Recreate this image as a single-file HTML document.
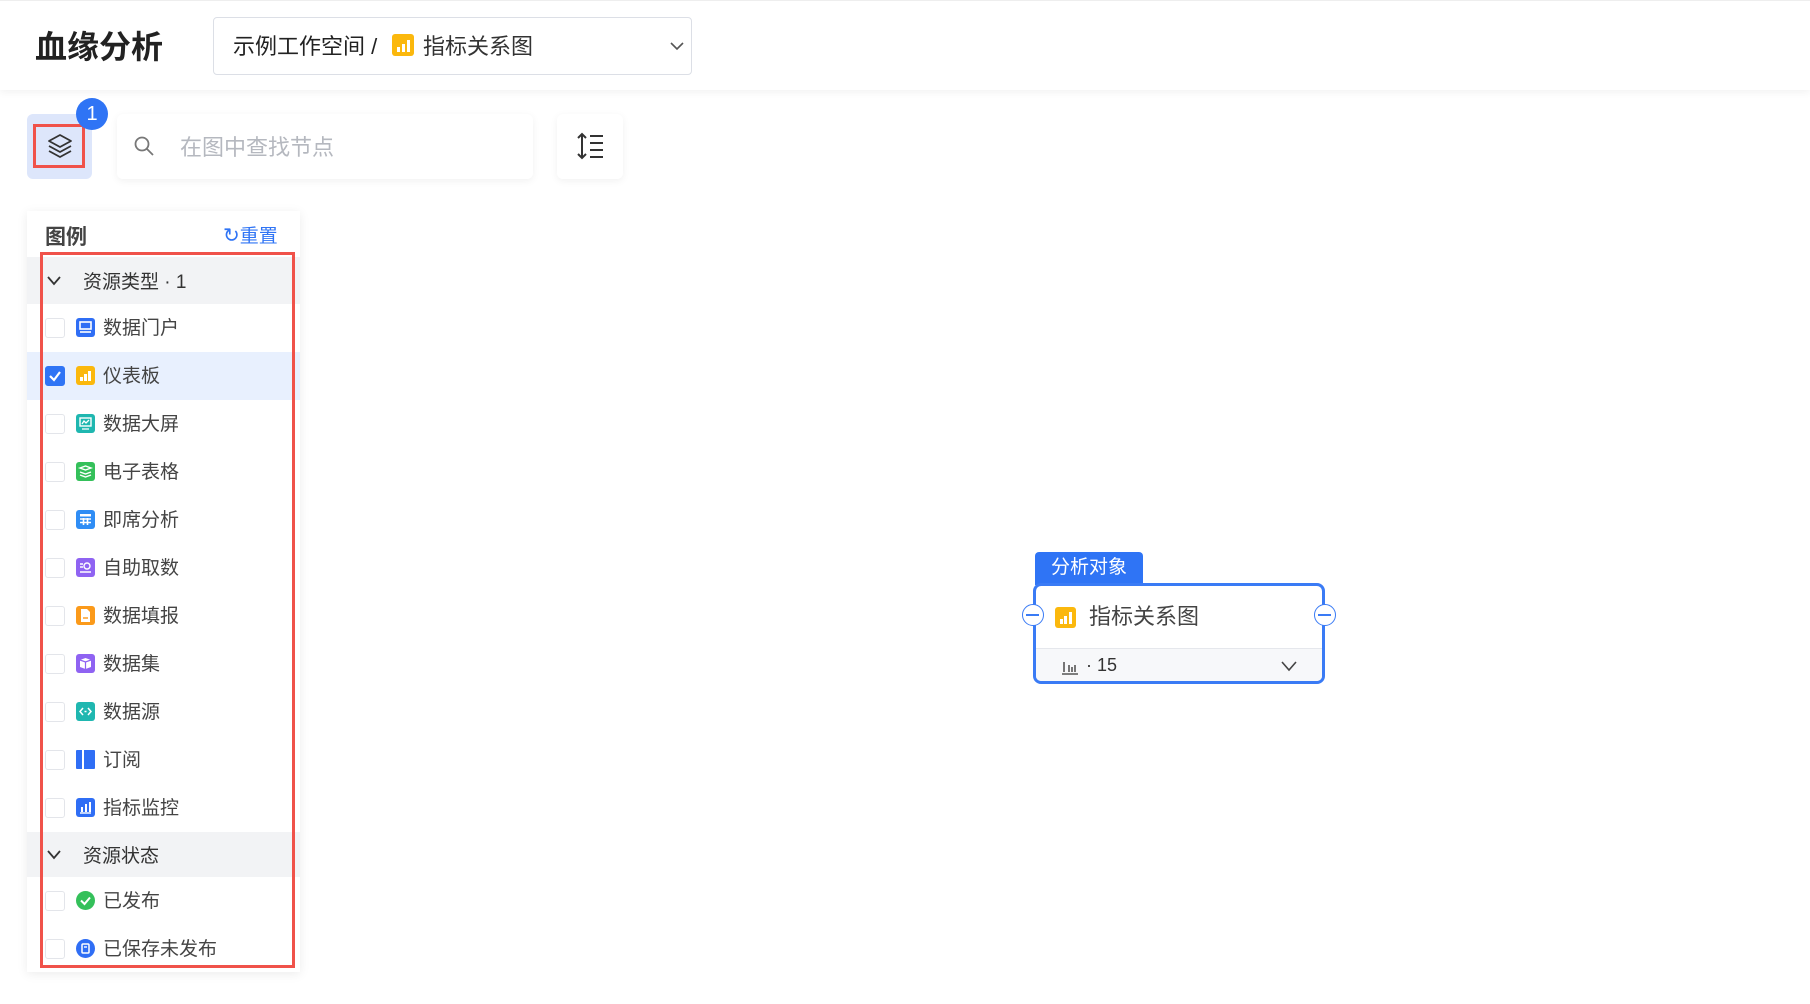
<!DOCTYPE html>
<html><head><meta charset="utf-8"><style>
*{box-sizing:border-box;margin:0;padding:0}
body{width:1810px;height:1004px;background:#fff;font-family:"Liberation Sans","Noto Sans CJK SC",sans-serif;position:relative;overflow:hidden;color:#333}
.abs{position:absolute}
.header{left:0;top:0;width:1810px;height:90px;background:#fff;box-shadow:0 2px 8px rgba(0,0,0,.06);border-top:1px solid #eee}
.title{left:35px;top:22px;font-size:32px;font-weight:bold;color:#222}
.dd{left:213px;top:17px;width:479px;height:58px;border:1px solid #dcdfe6;border-radius:4px;background:#fff}
.dd span{position:absolute;top:11px;font-size:22px;color:#222}
.btn{background:#fff;border-radius:6px;box-shadow:0 2px 8px rgba(0,0,0,.06)}
.panel{left:27px;top:211px;width:273px;height:761px;background:#fff;box-shadow:0 2px 10px rgba(0,0,0,.08)}
.row{position:absolute;left:0;width:273px;height:48px}
.row .cb{position:absolute;left:18px;top:14px;width:20px;height:20px;border:1px solid #e3e5ea;border-radius:3px;background:#fff}
.row .ic{position:absolute;left:49px;top:14px;width:19px;height:19px;border-radius:3px}
.row .ic svg{position:absolute;left:0;top:0}
.row .t{position:absolute;left:76px;top:9px;font-size:19px;color:#444}
.sec{position:absolute;left:0;width:273px;background:#f2f3f5}
.sec .t{position:absolute;left:56px;font-size:19px;color:#333}
</style></head><body>
<div class="abs header"></div>
<div class="abs title">血缘分析</div>
<div class="abs dd">
<span style="left:19px">示例工作空间 /</span>
<span style="left:178px;top:16px;width:22px;height:22px;background:#fbb80d;border-radius:3px"><svg width="22" height="22"><rect x="5" y="13" width="3" height="5" fill="#fff"/><rect x="10" y="10" width="3" height="8" fill="#fff"/><rect x="15" y="6" width="3" height="12" fill="#fff"/></svg></span>
<span style="left:209px;color:#333">指标关系图</span>
<svg style="position:absolute;left:455px;top:22px" width="16" height="12"><path d="M2 3 L8 9 L14 3" stroke="#555" stroke-width="1.6" fill="none"/></svg>
</div>

<div class="abs" style="left:27px;top:114px;width:65px;height:65px;background:#dde6fb;border-radius:6px"></div>
<div class="abs" style="left:33px;top:124px;width:52px;height:44px;border:3px solid #f0524a"></div>
<svg class="abs" style="left:45px;top:131px" width="30" height="30" viewBox="0 0 30 30"><g stroke="#333" stroke-width="1.8" fill="none" stroke-linejoin="round"><path d="M15 4 L26 10 L15 16 L4 10 Z"/><path d="M4 15 L15 21 L26 15"/><path d="M4 20 L15 26 L26 20"/></g></svg>
<div class="abs" style="left:76px;top:98px;width:32px;height:32px;border-radius:50%;background:#2f74f5;color:#fff;font-size:20px;text-align:center;line-height:32px">1</div>

<div class="abs btn" style="left:117px;top:114px;width:416px;height:65px"></div>
<svg class="abs" style="left:133px;top:135px" width="22" height="22"><circle cx="9" cy="9" r="6.5" stroke="#777" stroke-width="1.8" fill="none"/><path d="M14 14 L20 20" stroke="#777" stroke-width="1.8"/></svg>
<div class="abs" style="left:180px;top:130px;font-size:22px;color:#b5b8bf">在图中查找节点</div>

<div class="abs btn" style="left:557px;top:114px;width:66px;height:65px"></div>
<svg class="abs" style="left:576px;top:131px" width="30" height="30"><g stroke="#333" stroke-width="2" fill="none"><path d="M6 3 V27"/><path d="M2 7 L6 3 L10 7"/><path d="M2 23 L6 27 L10 23"/><path d="M14 5 H27 M14 12 H27 M14 19 H27 M14 26 H27"/></g></svg>

<div class="abs panel">
<div class="abs" style="left:18px;top:10px;font-size:21px;font-weight:bold;color:#444">图例</div>
<div class="abs" style="left:196px;top:10px;font-size:19px;color:#2f74f5"><span style="font-size:20px">↻</span>重置</div>
<div class="sec" style="top:46px;height:47px"><svg style="position:absolute;left:19px;top:18px" width="16" height="12"><path d="M2 2 L8 9 L14 2" stroke="#333" stroke-width="1.8" fill="none"/></svg><span class="t" style="top:10px">资源类型 · 1</span></div>
<div class="row" style="top:93px"><div class="cb"></div><div class="ic" style="background:#2f6ef5"><svg width="19" height="19"><rect x="4" y="4" width="11" height="7" fill="none" stroke="#fff" stroke-width="1.6"/><path d="M4 14 H15" stroke="#fff" stroke-width="1.6"/></svg></div><span class="t">数据门户</span></div>
<div class="row" style="top:141px;background:#e8f0fe"><div class="cb" style="background:#2f74f5;border-color:#2f74f5"><svg width="20" height="20" style="position:absolute;left:-1px;top:-1px"><path d="M5 10 L9 14 L15 6" stroke="#fff" stroke-width="2.2" fill="none"/></svg></div><div class="ic" style="background:#fbb80d"><svg width="19" height="19"><rect x="4" y="11" width="3" height="4" fill="#fff"/><rect x="8" y="8" width="3" height="7" fill="#fff"/><rect x="12" y="5" width="3" height="10" fill="#fff"/></svg></div><span class="t">仪表板</span></div>
<div class="row" style="top:189px"><div class="cb"></div><div class="ic" style="background:#1fb7b0"><svg width="19" height="19"><rect x="4" y="4" width="11" height="8" fill="none" stroke="#fff" stroke-width="1.4"/><path d="M6 10 L8 7 L10 9 L13 6 M6 15 H13" stroke="#fff" stroke-width="1.3" fill="none"/></svg></div><span class="t">数据大屏</span></div>
<div class="row" style="top:237px"><div class="cb"></div><div class="ic" style="background:#34c05a"><svg width="19" height="19"><path d="M4 6 L9.5 4 L15 6 L9.5 8 Z M4 10 L9.5 12 L15 10 M4 13 L9.5 15 L15 13" stroke="#fff" stroke-width="1.4" fill="none"/></svg></div><span class="t">电子表格</span></div>
<div class="row" style="top:285px"><div class="cb"></div><div class="ic" style="background:#2f8df5"><svg width="19" height="19"><rect x="4" y="4" width="11" height="2.5" fill="#fff"/><path d="M4 9 H15 M4 12.5 H15 M7.5 8 V15 M11.5 8 V15" stroke="#fff" stroke-width="1.6"/></svg></div><span class="t">即席分析</span></div>
<div class="row" style="top:333px"><div class="cb"></div><div class="ic" style="background:#8f63f2"><svg width="19" height="19"><circle cx="11" cy="8" r="3" stroke="#fff" stroke-width="1.4" fill="none"/><path d="M4 6 H7 M4 9 H7 M4 14 H15" stroke="#fff" stroke-width="1.4"/></svg></div><span class="t">自助取数</span></div>
<div class="row" style="top:381px"><div class="cb"></div><div class="ic" style="background:#fb9a1a"><svg width="19" height="19"><path d="M5 3 H11 L14 6 V16 H5 Z" fill="#fff"/><path d="M7 12 H12" stroke="#fb9a1a" stroke-width="1.4"/></svg></div><span class="t">数据填报</span></div>
<div class="row" style="top:429px"><div class="cb"></div><div class="ic" style="background:#8f63f2"><svg width="19" height="19"><path d="M4 6 L9.5 4 L15 6 V13 L9.5 15 L4 13 Z" fill="#fff"/><path d="M9.5 8 V15 M4 6 L9.5 8 L15 6" stroke="#8f63f2" stroke-width="1.2" fill="none"/></svg></div><span class="t">数据集</span></div>
<div class="row" style="top:477px"><div class="cb"></div><div class="ic" style="background:#1fb7b0"><svg width="19" height="19"><path d="M7 6 L4 9.5 L7 13 M12 6 L15 9.5 L12 13 M8.5 9.5 H10.5" stroke="#fff" stroke-width="1.5" fill="none"/></svg></div><span class="t">数据源</span></div>
<div class="row" style="top:525px"><div class="cb"></div><div class="ic" style="background:#2f6ef5;border-radius:1px"><svg width="19" height="19"><rect x="6" y="0" width="2" height="19" fill="#fff"/></svg></div><span class="t">订阅</span></div>
<div class="row" style="top:573px"><div class="cb"></div><div class="ic" style="background:#2f6ef5"><svg width="19" height="19"><path d="M4 15 H15" stroke="#fff" stroke-width="1.4"/><rect x="5" y="9" width="2" height="5" fill="#fff"/><rect x="9" y="6" width="2" height="8" fill="#fff"/><rect x="13" y="4" width="2" height="10" fill="#fff"/></svg></div><span class="t">指标监控</span></div>
<div class="sec" style="top:621px;height:45px"><svg style="position:absolute;left:19px;top:17px" width="16" height="12"><path d="M2 2 L8 9 L14 2" stroke="#333" stroke-width="1.8" fill="none"/></svg><span class="t" style="top:9px">资源状态</span></div>
<div class="row" style="top:666px"><div class="cb"></div><div class="ic" style="background:#34c05a;border-radius:50%"><svg width="19" height="19"><path d="M5 9.5 L8.5 13 L14 6.5" stroke="#fff" stroke-width="2" fill="none"/></svg></div><span class="t">已发布</span></div>
<div class="row" style="top:714px"><div class="cb"></div><div class="ic" style="background:#2f6ef5;border-radius:50%"><svg width="19" height="19"><rect x="6" y="5" width="7" height="9" rx="1" fill="none" stroke="#fff" stroke-width="1.5"/><path d="M8 8 H11" stroke="#fff" stroke-width="1.4"/></svg></div><span class="t">已保存未发布</span></div>
</div>
<div class="abs" style="left:40px;top:252px;width:255px;height:716px;border:3px solid #f0524a"></div>

<div class="abs" style="left:1035px;top:552px;width:108px;height:33px;background:#2f74f5;border-radius:4px 4px 0 0;color:#fff;font-size:19px;text-align:center;line-height:31px">分析对象</div>
<div class="abs" style="left:1033px;top:583px;width:292px;height:101px;border:3px solid #3a7bf5;border-radius:8px;background:#fff;overflow:hidden">
<div class="abs" style="left:19px;top:21px;width:21px;height:21px;background:#fbb80d;border-radius:3px"><svg width="21" height="21"><rect x="5" y="12" width="3" height="5" fill="#fff"/><rect x="9" y="9" width="3" height="8" fill="#fff"/><rect x="14" y="5" width="3" height="12" fill="#fff"/></svg></div>
<div class="abs" style="left:53px;top:13px;font-size:22px;color:#444">指标关系图</div>
<div class="abs" style="left:0;top:62px;width:290px;height:38px;background:#f7f8fa;border-top:1px solid #e5e7ec">
<svg style="position:absolute;left:25px;top:10px" width="18" height="16"><path d="M1 15 H17 M3 3 V13 M8 6 V13 M11 8 V13 M14 6 V13" stroke="#555" stroke-width="1.6"/></svg>
<span style="position:absolute;left:50px;top:6px;font-size:18px;color:#333">· 15</span>
<svg style="position:absolute;left:244px;top:11px" width="18" height="12"><path d="M2 2 L9 10 L16 2" stroke="#444" stroke-width="1.6" fill="none"/></svg>
</div></div>
<div class="abs" style="left:1022px;top:604px;width:22px;height:22px;border-radius:50%;border:1.5px solid #3a7bf5;background:#fff"><div style="position:absolute;left:3px;top:9px;width:13px;height:1.5px;background:#3a7bf5"></div></div>
<div class="abs" style="left:1314px;top:604px;width:22px;height:22px;border-radius:50%;border:1.5px solid #3a7bf5;background:#fff"><div style="position:absolute;left:3px;top:9px;width:13px;height:1.5px;background:#3a7bf5"></div></div>
</body></html>
